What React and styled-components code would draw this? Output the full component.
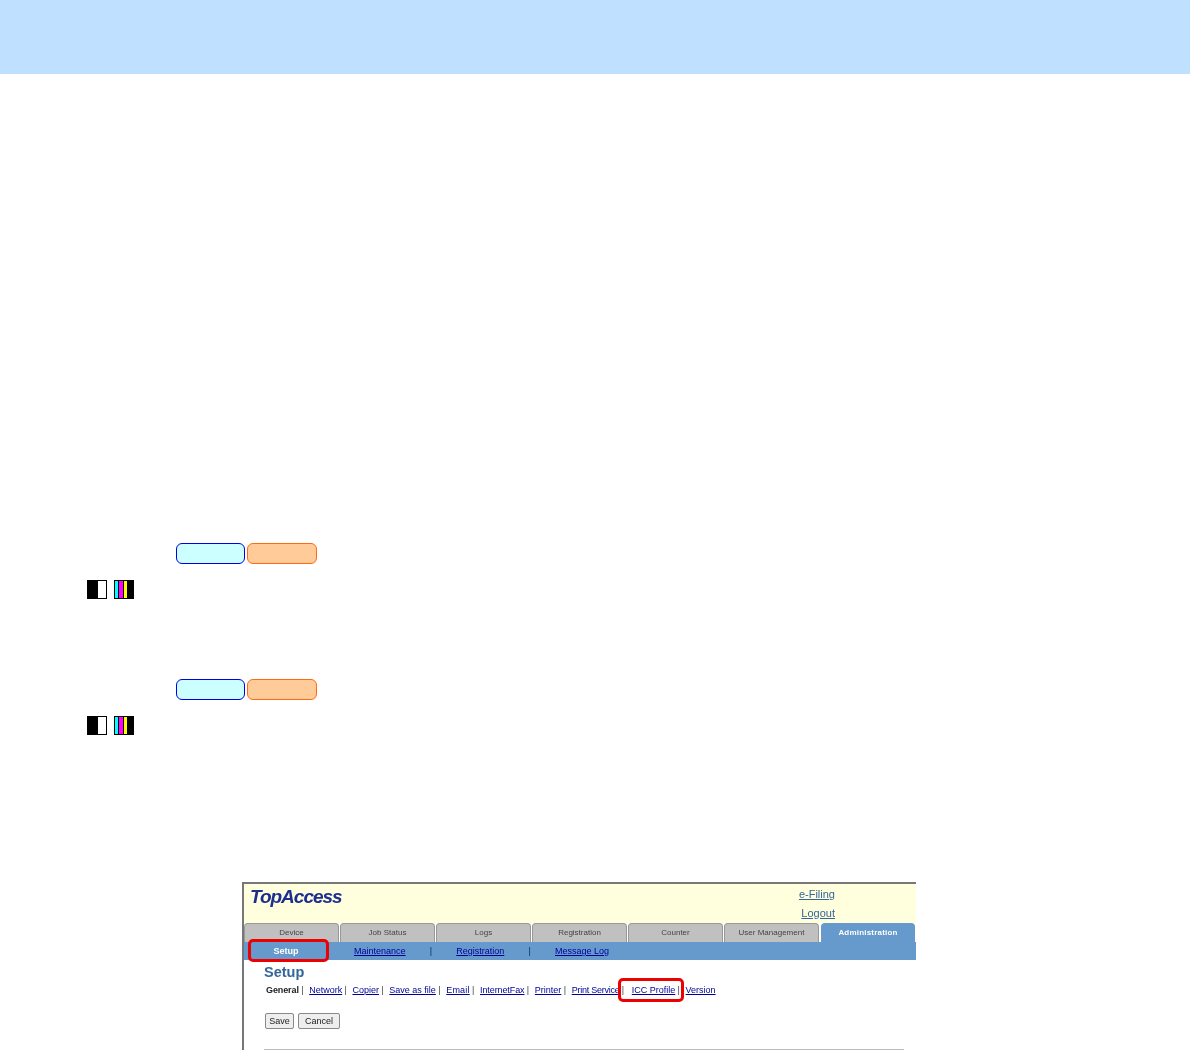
import styled, { createGlobalStyle } from "styled-components";

const GlobalStyle = createGlobalStyle`
  html, body {
    margin: 0;
    padding: 0;
    height: 1050px;
    overflow: hidden;
    background: #fff;
    font-family: "Liberation Sans", Arial, sans-serif;
  }
`;

const tabs = ["Device", "Job Status", "Logs", "Registration", "Counter", "User Management"];

// tracking is per link, the scan squeezes some words
const generalLinks = [
  { label: "Network", tracking: 0 },
  { label: "Copier", tracking: 0 },
  { label: "Save as file", tracking: 0 },
  { label: "Email", tracking: 0.2 },
  { label: "InternetFax", tracking: -0.1 },
  { label: "Printer", tracking: 0 },
  { label: "Print Service", tracking: -0.25 },
];

function MonoSwatch() {
  return (
    <svg width="20" height="19" viewBox="0 0 20 19">
      <rect width="20" height="19" fill="#000" />
      <rect x="11" y="1" width="8" height="17" fill="#fff" />
    </svg>
  );
}

function ColorSwatch() {
  return (
    <svg width="20" height="19" viewBox="0 0 20 19">
      <rect width="20" height="19" fill="#000" />
      <rect x="1" y="1" width="3" height="17" fill="#00ffff" />
      <rect x="5" y="1" width="4" height="17" fill="#ff00ff" />
      <rect x="10" y="1" width="3" height="17" fill="#ffff00" />
    </svg>
  );
}

function FunctionBlock() {
  return (
    <Block>
      <BadgeRow>
        <Badge $width={69} $fill="#ccffff" $edge="#0000ee" />
        <Badge $width={70} $fill="#ffcc99" $edge="#ff6a13" />
      </BadgeRow>
      <SwatchRow>
        <MonoSwatch />
        <ColorSwatch />
      </SwatchRow>
    </Block>
  );
}

export default function App() {
  return (
    <>
      <GlobalStyle />
      <TopBand />
      <Main>
        <FunctionBlock />
        <FunctionBlock />
      </Main>
      <Shot>
        <Banner>
          <Logo>TopAccess</Logo>
          <BannerLinks>
            <BannerLink>e-Filing</BannerLink>
            <BannerLink>Logout</BannerLink>
          </BannerLinks>
        </Banner>
        <TabRow>
          {tabs.map((tab) => (
            <Tab key={tab}>{tab}</Tab>
          ))}
          <Tab $active>Administration</Tab>
        </TabRow>
        <SubNav>
          <SubNavCurrent>Setup</SubNavCurrent>
          <SubNavLink>Maintenance</SubNavLink>
          <SubNavSep>|</SubNavSep>
          <SubNavLink>Registration</SubNavLink>
          <SubNavSep>|</SubNavSep>
          <SubNavLink>Message Log</SubNavLink>
        </SubNav>
        <Content>
          <Heading>Setup</Heading>
          <LinkRow>
            <CurrentLink>General</CurrentLink>
            <LinkSep>|</LinkSep>
            {generalLinks.map((link) => (
              <span key={link.label}>
                <PageLink $tracking={link.tracking}>{link.label}</PageLink>
                <LinkSep>|</LinkSep>
              </span>
            ))}
            <PageLink $offset={2}>ICC Profile</PageLink>
            <LinkSep>|</LinkSep>
            <PageLink>Version</PageLink>
          </LinkRow>
          <ButtonRow>
            <ShotButton $width={29}>Save</ShotButton>
            <ShotButton $width={42}>Cancel</ShotButton>
          </ButtonRow>
          <Divider />
        </Content>
        <Callout $left={4} $top={55} $width={81} $height={23} />
        <Callout $left={374} $top={94} $width={66} $height={24} />
      </Shot>
    </>
  );
}

const TopBand = styled.div`
  height: 74px;
  background: #c0e0ff;
`;

const Main = styled.main`
  display: flex;
  flex-direction: column;
  gap: 79px;
  padding: 469px 0 0 87px;
`;

const Block = styled.section`
  display: flex;
  flex-direction: column;
  gap: 16px;
`;

const BadgeRow = styled.div`
  display: flex;
  gap: 2px;
  margin-left: 89px;
`;

const Badge = styled.div`
  box-sizing: border-box;
  width: ${(p) => p.$width}px;
  height: 21px;
  background: ${(p) => p.$fill};
  border: 1px solid ${(p) => p.$edge};
  border-radius: 6px;
`;

const SwatchRow = styled.div`
  display: flex;
  gap: 7px;
  height: 20px;
  svg {
    display: block;
  }
`;

const Shot = styled.div`
  position: relative;
  box-sizing: border-box;
  width: 674px;
  height: 168px;
  margin: 146px 0 0 242px;
  border-top: 2px solid #777;
  border-left: 2px solid #777;
  overflow: hidden;
  filter: blur(0.35px);
`;

const Banner = styled.div`
  display: flex;
  justify-content: space-between;
  height: 39px;
  background: #ffffdd;
`;

const Logo = styled.div`
  padding: 1px 0 0 6px;
  font-size: 19px;
  line-height: 24px;
  font-weight: bold;
  font-style: italic;
  letter-spacing: -1px;
  color: #1c2f8f;
`;

const BannerLinks = styled.div`
  display: flex;
  flex-direction: column;
  align-items: flex-end;
  padding: 1px 81px 0 0;
`;

const BannerLink = styled.a`
  font-size: 11px;
  line-height: 19px;
  color: #336699;
  text-decoration: underline;
`;

const TabRow = styled.div`
  display: flex;
  gap: 1px;
  height: 19px;
`;

const Tab = styled.div`
  box-sizing: border-box;
  width: ${(p) => (p.$active ? "94px" : "95px")};
  margin-left: ${(p) => (p.$active ? "1px" : "0")};
  border: 1px solid ${(p) => (p.$active ? "#6699cc" : "#999")};
  border-bottom: none;
  border-radius: 4px 4px 0 0;
  background: ${(p) => (p.$active ? "#6699cc" : "#c0c0c0")};
  color: ${(p) => (p.$active ? "#fff" : "#444")};
  font-size: 8px;
  font-weight: ${(p) => (p.$active ? "bold" : "normal")};
  letter-spacing: ${(p) => (p.$active ? "0.2px" : "0")};
  line-height: 17px;
  text-align: center;
`;

const SubNav = styled.nav`
  display: flex;
  align-items: center;
  gap: 24.2px;
  height: 18px;
  background: #6699cc;
  font-size: 9px;
`;

const SubNavCurrent = styled.span`
  box-sizing: border-box;
  width: 85.8px;
  padding-right: 2px;
  color: #fff;
  font-weight: bold;
  text-align: center;
`;

const SubNavLink = styled.a`
  color: #000099;
  text-decoration: underline;
`;

const SubNavSep = styled.span`
  color: #003366;
`;

const Content = styled.div`
  padding: 4px 12px 0 20px;
`;

const Heading = styled.h1`
  margin: 0;
  font-size: 14.5px;
  line-height: 17px;
  color: #336699;
`;

const LinkRow = styled.div`
  display: flex;
  margin: 4px 0 0 2px;
  font-size: 9px;
  line-height: 11px;
  color: #222;
  white-space: nowrap;
`;

const CurrentLink = styled.strong`
  letter-spacing: -0.1px;
`;

const PageLink = styled.a`
  margin-left: ${(p) => p.$offset || 0}px;
  letter-spacing: ${(p) => p.$tracking || 0}px;
  color: #000099;
  text-decoration: underline;
`;

const LinkSep = styled.span`
  margin: 0 5.7px 0 2.3px;
  color: #444;
`;

const ButtonRow = styled.div`
  display: flex;
  gap: 4px;
  margin: 17px 0 0 1px;
`;

const ShotButton = styled.button`
  box-sizing: border-box;
  width: ${(p) => p.$width}px;
  height: 16px;
  padding: 0;
  border: 1px solid #888;
  border-radius: 2px;
  background: #eeeeee;
  color: #222;
  font-family: inherit;
  font-size: 9px;
  line-height: 14px;
`;

const Divider = styled.hr`
  height: 1px;
  margin: 20px 0 0;
  border: none;
  background: #bbb;
`;

const Callout = styled.div`
  position: absolute;
  box-sizing: border-box;
  left: ${(p) => p.$left}px;
  top: ${(p) => p.$top}px;
  width: ${(p) => p.$width}px;
  height: ${(p) => p.$height}px;
  border: 3px solid #ee0000;
  border-radius: 5px;
`;
